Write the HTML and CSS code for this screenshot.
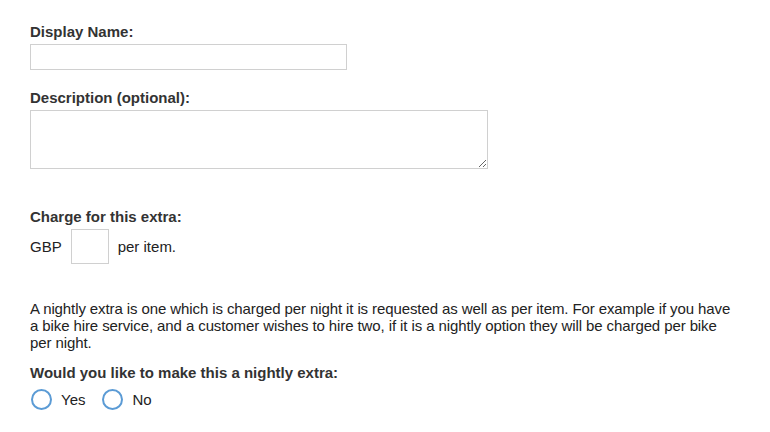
FILE: index.html
```html
<!DOCTYPE html>
<html>
<head>
<meta charset="utf-8">
<link rel="stylesheet" href="styles.css">
</head>
<body>
<form class="form">
  <div class="field">
    <label class="label">Display Name:</label>
    <input class="text-input" type="text">
  </div>
  <div class="field field-desc">
    <label class="label">Description (optional):</label>
    <textarea class="textarea"></textarea>
  </div>
  <div class="field field-charge">
    <label class="label">Charge for this extra:</label>
    <div class="charge-row">
      <span>GBP</span>
      <input class="price-input" type="text">
      <span>per item.</span>
    </div>
  </div>
  <p class="info">A nightly extra is one which is charged per night it is requested as well as per item. For example if you have a bike hire service, and a customer wishes to hire two, if it is a nightly option they will be charged per bike per night.</p>
  <div class="field field-nightly">
    <label class="label">Would you like to make this a nightly extra:</label>
    <div class="radio-row">
      <span class="radio-option"><span class="radio"></span><span>Yes</span></span>
      <span class="radio-option"><span class="radio"></span><span>No</span></span>
    </div>
  </div>
</form>
</body>
</html>
```
FILE: styles.css
```css
html, body {
  margin: 0;
  padding: 0;
  background: #fff;
}
body {
  font-family: "Liberation Sans", Arial, sans-serif;
  font-size: 15px;
  line-height: 17px;
  color: #222;
}
.form {
  padding: 23px 30px 0 30px;
  width: 710px;
}
.field {
  display: flex;
  flex-direction: column;
  align-items: flex-start;
}
.label {
  font-weight: bold;
  color: #333;
  display: block;
  margin-bottom: 4px;
}
.text-input {
  box-sizing: border-box;
  width: 317px;
  height: 26px;
  border: 1px solid #d0d0d0;
  margin: 0;
  padding: 0;
}
.field-desc {
  margin-top: 19px;
}
.textarea {
  box-sizing: border-box;
  width: 458px;
  height: 59px;
  border: 1px solid #d0d0d0;
  margin: 0;
  padding: 0;
  resize: both;
}
.field-charge {
  margin-top: 39px;
}
.charge-row {
  display: flex;
  align-items: center;
  gap: 9px;
}
.price-input {
  box-sizing: border-box;
  width: 38px;
  height: 35px;
  border: 1px solid #d0d0d0;
  margin: 0;
  padding: 0;
}
.info {
  margin: 36px 0 0 0;
  width: 706px;
  letter-spacing: -0.1px;
}
.field-nightly {
  margin-top: 13px;
}
.field-nightly .label {
  margin-bottom: 8px;
}
.radio-row {
  display: flex;
  align-items: center;
  gap: 16px;
}
.radio-option {
  display: flex;
  align-items: center;
  gap: 9px;
  padding-left: 1px;
}
.radio {
  box-sizing: border-box;
  width: 21px;
  height: 21px;
  border: 2px solid #5b9bd5;
  border-radius: 50%;
}
```
